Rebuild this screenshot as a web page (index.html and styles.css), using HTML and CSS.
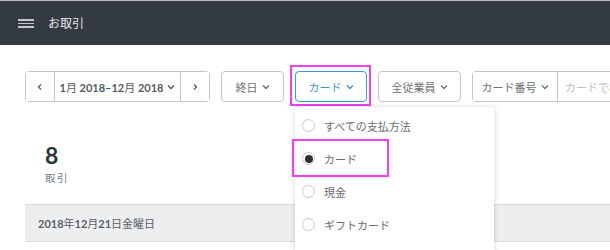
FILE: index.html
```html
<!DOCTYPE html>
<html lang="ja">
<head>
<meta charset="utf-8">
<link rel="stylesheet" href="styles.css">
</head>
<body>
<header class="topbar">
  <span class="burger"><i></i><i></i><i></i></span>
  <span class="title">お取引</span>
</header>
<main class="content">
  <div class="toolbar">
    <div class="btn-group date-group">
      <button class="btn btn-icon"><svg width="8" height="8" viewBox="0 0 8 8"><path d="M5 1.5L2.5 4L5 6.5" fill="none" stroke="#555a60" stroke-width="1.3"/></svg></button>
      <button class="btn btn-date"><span>1<span class="cjk">月</span> 2018–12<span class="cjk">月</span> 2018</span><svg class="chev" width="8" height="6" viewBox="0 0 8 6"><path d="M1 1.5L4 4.5L7 1.5" fill="none" stroke="currentColor" stroke-width="1.4"/></svg></button>
      <button class="btn btn-icon"><svg width="8" height="8" viewBox="0 0 8 8"><path d="M3 1.5L5.5 4L3 6.5" fill="none" stroke="#555a60" stroke-width="1.3"/></svg></button>
    </div>
    <button class="btn btn-single btn-day">終日 <svg class="chev" width="8" height="6" viewBox="0 0 8 6"><path d="M1 1.5L4 4.5L7 1.5" fill="none" stroke="currentColor" stroke-width="1.4"/></svg></button>
    <div class="card-wrap">
      <button class="btn btn-single btn-active">カード <svg class="chev" width="8" height="6" viewBox="0 0 8 6"><path d="M1 1.5L4 4.5L7 1.5" fill="none" stroke="currentColor" stroke-width="1.4"/></svg></button>
      <span class="hl hl-btn"></span>
      <div class="menu">
        <div class="menu-item"><span class="radio"></span>すべての支払方法</div>
        <div class="menu-item"><span class="radio radio-on"></span>カード</div>
        <div class="menu-item"><span class="radio"></span>現金</div>
        <div class="menu-item"><span class="radio"></span>ギフトカード</div>
        <span class="hl hl-item"></span>
      </div>
    </div>
    <button class="btn btn-single btn-staff">全従業員 <svg class="chev" width="8" height="6" viewBox="0 0 8 6"><path d="M1 1.5L4 4.5L7 1.5" fill="none" stroke="currentColor" stroke-width="1.4"/></svg></button>
    <div class="btn-group card-group">
      <button class="btn btn-cardno">カード番号 <svg class="chev" width="8" height="6" viewBox="0 0 8 6"><path d="M1 1.5L4 4.5L7 1.5" fill="none" stroke="currentColor" stroke-width="1.4"/></svg></button>
      <span class="search">カードで検索</span>
    </div>
  </div>
  <div class="stats">
    <div class="stat-num">8</div>
    <div class="stat-label">取引</div>
  </div>
  <div class="day-band">2018<span class="cjk">年</span>12<span class="cjk">月</span>21<span class="cjk">日金曜日</span></div>
</main>
</body>
</html>
```
FILE: styles.css
```css
* { box-sizing: border-box; }
html, body { margin: 0; padding: 0; }
body {
  width: 610px;
  height: 250px;
  overflow: hidden;
  background: #fff;
  font-family: Lato, "Noto Sans CJK JP", sans-serif;
  color: #676b71;
}
.topbar {
  height: 45px;
  background: #343a41;
  border-top: 1px solid #b9bcbf;
  display: flex;
  align-items: center;
  padding-left: 18px;
  gap: 14px;
}
.burger {
  display: flex;
  flex-direction: column;
  gap: 2px;
  width: 16px;
  padding-top: 1px;
}
.burger i {
  display: block;
  height: 1.5px;
  background: #c3c7cb;
}
.title {
  color: #e9eaeb;
  font-size: 12px;
  padding-bottom: 1px;
}
.content {
  padding-left: 25px;
  width: 700px;
}
.toolbar {
  display: flex;
  gap: 11px;
  margin-top: 26px;
  height: 31px;
}
.btn {
  font-family: inherit;
  height: 31px;
  border: 1px solid #c3c5c9;
  background: #fff;
  color: #6c7076;
  font-size: 11px;
  display: flex;
  align-items: center;
  justify-content: center;
  gap: 4px;
  padding: 0;
  margin: 0;
}
.cjk { font-weight: 400; }
.btn-single { border-radius: 4px; }
.btn-group {
  display: flex;
  border: 1px solid #c3c5c9;
  border-radius: 4px;
  height: 31px;
}
.btn-group .btn { border: none; height: 29px; }
.date-group { width: 185px; }
.btn-icon { width: 28px; }
.date-group .btn-date {
  width: 129px;
  border-left: 1px solid #c3c5c9;
  border-right: 1px solid #c3c5c9;
  font-weight: 700;
  color: #555a60;
}
.chev { margin-top: 1px; }
.btn-day { width: 63px; }
.card-wrap { position: relative; }
.btn-active {
  width: 72px;
  border-color: #3c9bd3;
  color: #3b95cb;
}
.btn-staff { width: 83px; }
.card-group { width: 160px; }
.btn-cardno {
  width: 95px;
  border-right: 1px solid #c3c5c9 !important;
}
.search {
  color: #bdc0c4;
  font-size: 11px;
  display: flex;
  align-items: center;
  padding-left: 7px;
  white-space: nowrap;
}
.hl {
  position: absolute;
  border: 2px solid #f23ff0;
  pointer-events: none;
}
.hl-btn {
  left: -5px;
  top: -6px;
  width: 81px;
  height: 41px;
}
.menu {
  position: absolute;
  left: 0;
  top: 36px;
  width: 199px;
  height: 160px;
  background: #fff;
  border-radius: 3px;
  box-shadow: 0 1px 6px rgba(0,0,0,0.16), 0 0 1px rgba(0,0,0,0.12);
  padding-top: 2px;
  z-index: 5;
}
.menu-item {
  height: 33px;
  display: flex;
  align-items: center;
  gap: 9px;
  padding-left: 7px;
  font-size: 11px;
  color: #676b71;
}
.radio {
  width: 13px;
  height: 13px;
  border-radius: 50%;
  border: 1px solid #c9cbce;
  display: flex;
  align-items: center;
  justify-content: center;
}
.radio-on::after {
  content: "";
  width: 8px;
  height: 8px;
  border-radius: 50%;
  background: #2c3137;
}
.hl-item {
  left: -3px;
  top: 32px;
  width: 97px;
  height: 38px;
}
.stats {
  margin-top: 40px;
  padding-left: 20px;
  height: 62px;
}
.stat-num {
  font-size: 23px;
  font-weight: 700;
  color: #2f343a;
  line-height: 26px;
}
.stat-label {
  font-size: 10.5px;
  letter-spacing: 1.5px;
  color: #73777d;
  margin-top: 2px;
}
.day-band {
  height: 38px;
  background: #edeef0;
  border-top: 1px solid #d6d8db;
  border-bottom: 1px solid #d6d8db;
  display: flex;
  align-items: center;
  padding-left: 13px;
  font-size: 11px;
  color: #5a5f65;
  font-weight: 700;
}
```
